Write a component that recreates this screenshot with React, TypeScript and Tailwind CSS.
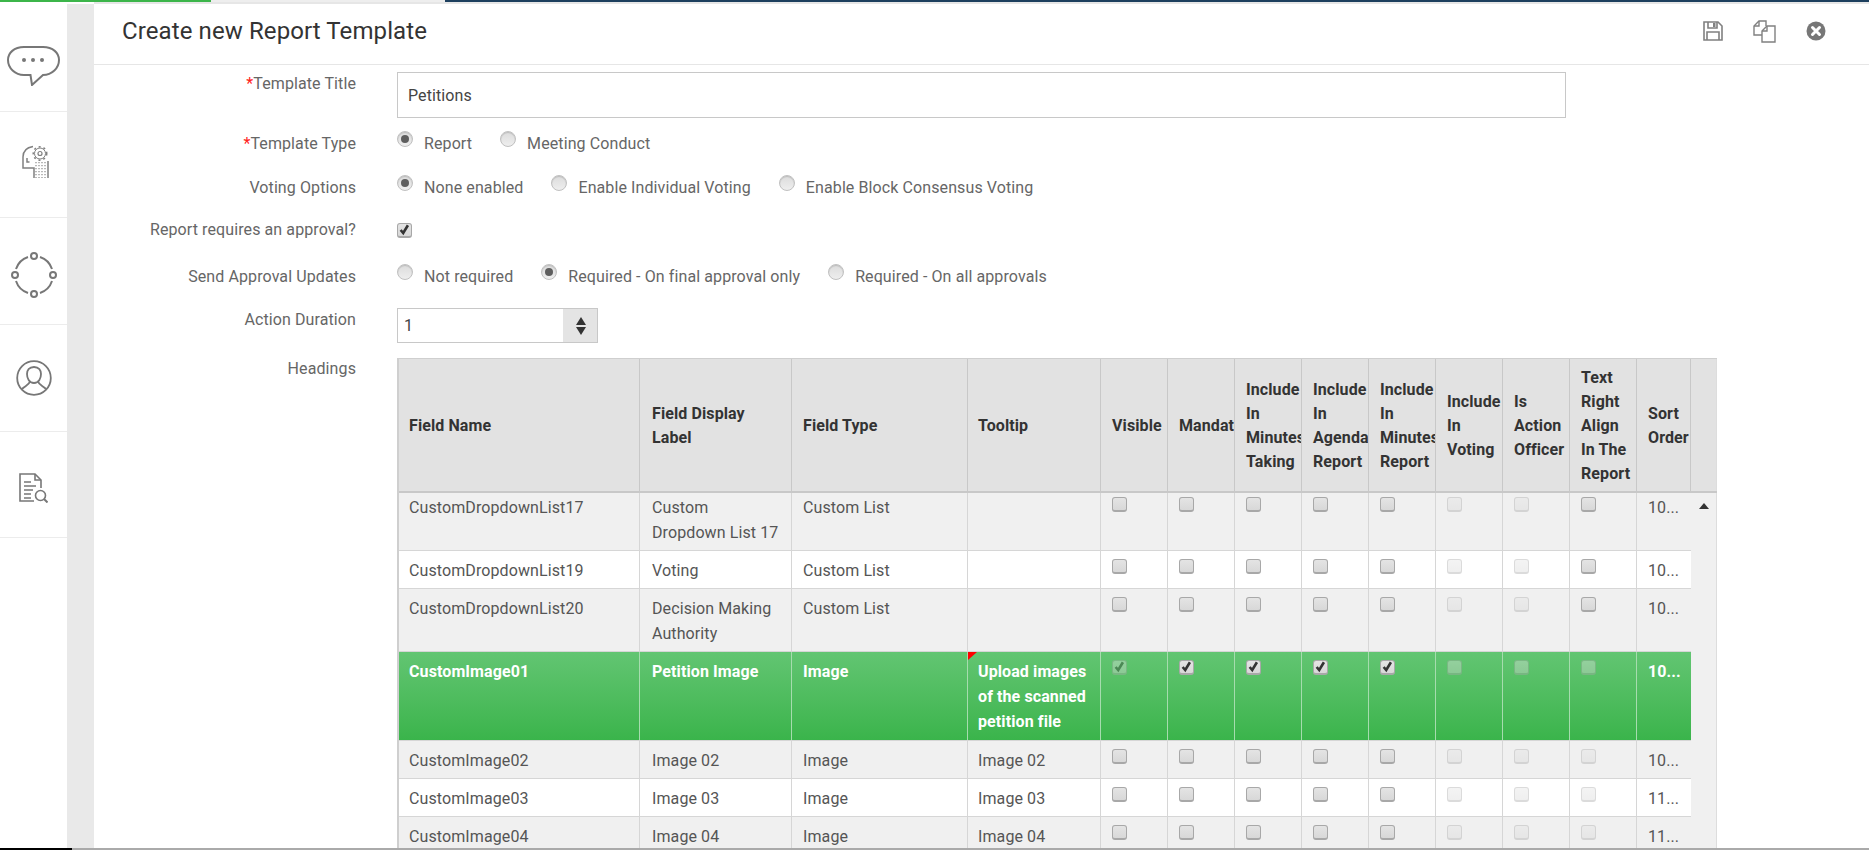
const COLS = "grid grid-cols-[241px_152px_176px_133px_67px_67px_67px_67px_67px_67px_67px_67px_54px]";

type Box = "on" | "off" | "dim" | "dimOn";
type Row = {
  height: string;
  pad: string;
  boxPad: string;
  cells: string[];
  boxes: Box[];
  sort: string;
  striped?: boolean;
  active?: boolean;
};

const HEADERS = [
  "Visible",
  "Mandatory",
  "Include\nIn\nMinutes\nTaking",
  "Include\nIn\nAgenda\nReport",
  "Include\nIn\nMinutes\nReport",
  "Include\nIn\nVoting",
  "Is\nAction\nOfficer",
  "Text\nRight\nAlign\nIn The\nReport",
  "Sort\nOrder",
];

const OPEN: Box[] = ["off", "off", "off", "off", "off", "dim", "dim", "off"];
const LOCKED: Box[] = ["off", "off", "off", "off", "off", "dim", "dim", "dim"];

const ROWS: Row[] = [
  { height: "h-[58px]", pad: "pt-[2px]", boxPad: "pt-[4px]", cells: ["CustomDropdownList17", "Custom\nDropdown List 17", "Custom List", ""], boxes: OPEN, sort: "10...", striped: true },
  { height: "h-[38px]", pad: "pt-[7px]", boxPad: "pt-[8px]", cells: ["CustomDropdownList19", "Voting", "Custom List", ""], boxes: OPEN, sort: "10..." },
  { height: "h-[63px]", pad: "pt-[7px]", boxPad: "pt-[8px]", cells: ["CustomDropdownList20", "Decision Making\nAuthority", "Custom List", ""], boxes: OPEN, sort: "10...", striped: true },
  { height: "h-[89px]", pad: "pt-[7px]", boxPad: "pt-[8px]", cells: ["CustomImage01", "Petition Image", "Image", "Upload images\nof the scanned\npetition file"], boxes: ["dimOn", "on", "on", "on", "on", "dim", "dim", "dim"], sort: "10...", active: true },
  { height: "h-[38px]", pad: "pt-[7px]", boxPad: "pt-[8px]", cells: ["CustomImage02", "Image 02", "Image", "Image 02"], boxes: LOCKED, sort: "10...", striped: true },
  { height: "h-[38px]", pad: "pt-[7px]", boxPad: "pt-[8px]", cells: ["CustomImage03", "Image 03", "Image", "Image 03"], boxes: LOCKED, sort: "11..." },
  { height: "h-[38px]", pad: "pt-[7px]", boxPad: "pt-[8px]", cells: ["CustomImage04", "Image 04", "Image", "Image 04"], boxes: LOCKED, sort: "11...", striped: true },
];

function Tick() {
  return (
    <svg viewBox="0 0 14 14" className="h-full w-full">
      <path d="M2.5 7 L5.5 10.5 L11 1.5" fill="none" stroke="#333" strokeWidth="3" />
    </svg>
  );
}

function Checkbox({ state }: { state: Box }) {
  const faded = state === "dim" || state === "dimOn";
  const checked = state === "on" || state === "dimOn";
  return (
    <span
      className={`block h-[15px] w-[15px] rounded-[3px] border border-b-2 border-[#a8a8a8] bg-gradient-to-b from-[#e4e4e4] to-[#d8d8d8] ${faded ? "opacity-40" : ""}`}
    >
      {checked && <Tick />}
    </span>
  );
}

function Radio({ on }: { on?: boolean }) {
  return (
    <span className="mb-2 flex h-4 w-4 shrink-0 items-center justify-center rounded-full border border-[#c0c0c0] bg-gradient-to-b from-[#dcdcdc] to-[#eeeeee] shadow-[inset_0_1px_1px_rgba(0,0,0,0.15)]">
      {on && <span className="h-2 w-2 rounded-full bg-[#5e5e5e]" />}
    </span>
  );
}

function Option({ label, on }: { label: string; on?: boolean }) {
  return (
    <div className="flex items-center gap-[11px]">
      <Radio on={on} />
      <span className="translate-y-px">{label}</span>
    </div>
  );
}

function FormRow({ label, required, drop, className, children }: { label: string; required?: boolean; drop?: boolean; className: string; children: React.ReactNode }) {
  return (
    <div className={`flex ${className}`}>
      <div className={`w-[262px] shrink-0 text-right leading-6 text-[#666] ${drop ? "translate-y-px" : ""}`}>
        {required && <span className="text-[#ff2020]">*</span>}
        {label}
      </div>
      <div className="ml-[41px] flex min-h-6 items-center gap-7 leading-6 text-[#666]">{children}</div>
    </div>
  );
}

function SideItem({ pad, children }: { pad: string; children: React.ReactNode }) {
  return <div className={`flex justify-center border-b border-[#ececec] ${pad}`}>{children}</div>;
}

function ChatIcon() {
  return (
    <svg width="53" height="40" viewBox="0 0 53 40" fill="none" stroke="#777" strokeWidth="2">
      <path d="M17 1 H36 C46 1 52 7 52 14 C52 22 45 29 36 29 H36 L25 39 L23.5 29 H17 C8 29 1 22 1 14 C1 7 7 1 17 1 Z" />
      <circle cx="17" cy="14" r="2" fill="#777" stroke="none" />
      <circle cx="26" cy="14" r="2" fill="#777" stroke="none" />
      <circle cx="35" cy="14" r="2" fill="#777" stroke="none" />
    </svg>
  );
}

function HeadIcon() {
  return (
    <svg width="28" height="33" viewBox="0 0 28 33" fill="none" stroke="#808080" strokeWidth="1.5">
      <path d="M11 1.5 C4.5 2.5 1 6.5 1 12 V23 H12 V33" />
      <circle cx="18" cy="8.5" r="2" strokeWidth="1.2" />
      <circle cx="18" cy="8.5" r="5.5" strokeWidth="1" />
      <circle cx="18" cy="8.5" r="6.7" strokeDasharray="2 3" strokeWidth="1.6" />
      <path d="M5 13 V17 H7.5" />
      <path d="M26 16 V33" />
      <path d="M14 17 V33 M17 17 V33 M20 17 V33 M23 17 V33" strokeDasharray="1.2 1.8" strokeWidth="1.1" />
    </svg>
  );
}

function RingIcon() {
  return (
    <svg width="46" height="46" viewBox="0 0 46 46" fill="none" stroke="#777" strokeWidth="2">
      <circle cx="23" cy="4" r="3" />
      <circle cx="42" cy="23" r="3" />
      <circle cx="23" cy="42" r="3" />
      <circle cx="4" cy="23" r="3" />
      <path d="M29 5 A19 19 0 0 1 41 17" />
      <path d="M41 29 A19 19 0 0 1 29 41" />
      <path d="M17 41 A19 19 0 0 1 5 29" />
      <path d="M5 17 A19 19 0 0 1 17 5" />
    </svg>
  );
}

function UserIcon() {
  return (
    <svg width="36" height="36" viewBox="0 0 36 36" fill="none" stroke="#777" strokeWidth="1.8">
      <circle cx="18" cy="18" r="16.8" />
      <path d="M18 7 C13 7 11 10.5 11 14 C11 18 13 23 18 23 C23 23 25 18 25 14 C25 10.5 23 7 18 7 Z" />
      <path d="M14 21.5 C13 25 9 26 6 29" />
      <path d="M22 21.5 C23 25 27 26 30 29" />
    </svg>
  );
}

function DocSearchIcon() {
  return (
    <svg width="29" height="30" viewBox="0 0 29 30" fill="none" stroke="#777" strokeWidth="1.6">
      <path d="M22 15 V7 L16 1 H1 V28 H15" />
      <path d="M16 1 V7 H22" />
      <path d="M5 9 H12 M5 13 H17 M5 17 H14 M5 21 H12 M5 25 H12" />
      <circle cx="21.5" cy="22.5" r="5" />
      <path d="M25 26 L28.5 29.5" strokeWidth="2" />
    </svg>
  );
}

function SaveIcon() {
  return (
    <svg width="20" height="20" viewBox="0 0 20 20" fill="none" stroke="#808080" strokeWidth="1.6">
      <path d="M1 1 H15 L19 5 V19 H1 Z" />
      <path d="M5 1 V7 H14 V1" />
      <rect x="10" y="2" width="2.5" height="4" fill="#808080" stroke="none" />
      <path d="M4 19 V11 H16 V19" />
    </svg>
  );
}

function CopyIcon() {
  return (
    <svg width="23" height="23" viewBox="0 0 23 23" fill="none" stroke="#808080" strokeWidth="1.4">
      <path d="M9 15 H1 V6 L6 1 H13 V6" />
      <path d="M6 1 V6 H1" />
      <path d="M9 11 L14 6 H22 V22 H9 Z" fill="#fff" />
      <path d="M14 6 V11 H9" />
    </svg>
  );
}

function CloseIcon() {
  return (
    <svg width="20" height="20" viewBox="0 0 20 20">
      <circle cx="10" cy="10" r="9.5" fill="#777" />
      <path d="M6.5 6.5 L13.5 13.5 M13.5 6.5 L6.5 13.5" stroke="#fff" strokeWidth="3" strokeLinecap="round" />
    </svg>
  );
}

function HeadCell({ text, className = "pl-[11px]" }: { text: string; className?: string }) {
  return (
    <div className={`flex items-center overflow-hidden border-r border-[#c8c8c8] pt-[2px] leading-6 font-bold whitespace-pre text-[#333] ${className}`}>
      {text}
    </div>
  );
}

function BodyRow({ row }: { row: Row }) {
  const bg = row.active
    ? "bg-gradient-to-b from-[#62c572] to-[#3ab44b] font-bold text-white"
    : row.striped
      ? "bg-[#f0f0f0] text-[#555]"
      : "bg-white text-[#555]";
  const line = row.active ? "border-[#a6dcae]" : "border-[#d6d6d6]";
  return (
    <div className={`${COLS} ${row.height} ${bg} border-b border-[#d6d6d6] leading-[25px]`}>
      {row.cells.map((cell, i) => (
        <div key={i} className={`relative overflow-hidden border-r whitespace-pre-line ${line} ${row.pad} ${i === 0 ? "pl-[10px]" : i === 1 ? "pl-3" : i === 3 ? "pl-[10px]" : "pl-[11px]"}`}>
          {row.active && i === 3 && (
            <span className="absolute top-0 left-0 h-0 w-0 border-t-[8px] border-r-[9px] border-t-[#ff0000] border-r-transparent" />
          )}
          {cell}
        </div>
      ))}
      {row.boxes.map((box, i) => (
        <div key={i} className={`border-r pl-[11px] ${line} ${row.boxPad}`}>
          <Checkbox state={box} />
        </div>
      ))}
      <div className={`overflow-hidden pl-[11px] whitespace-nowrap ${row.pad}`}>{row.sort}</div>
    </div>
  );
}

export default function App() {
  return (
    <div className="flex h-screen flex-col overflow-hidden bg-white font-['Roboto',sans-serif] text-base tracking-[0.1px]">
      <div className="flex h-[2px] shrink-0">
        <div className="w-[211px] bg-[#3cb54a]" />
        <div className="w-[234px] bg-[#eeeeee]" />
        <div className="flex-1 bg-[#1d3f5e]" />
      </div>

      <div className="flex min-h-0 flex-1">
        <aside className="w-[67px] shrink-0">
          <SideItem pad="h-[110px] pt-[44px]">
            <ChatIcon />
          </SideItem>
          <SideItem pad="h-[106px] pt-[33px] pl-1">
            <HeadIcon />
          </SideItem>
          <SideItem pad="h-[107px] pt-[34px]">
            <RingIcon />
          </SideItem>
          <SideItem pad="h-[107px] pt-[35px]">
            <UserIcon />
          </SideItem>
          <SideItem pad="h-[106px] pt-[41px]">
            <DocSearchIcon />
          </SideItem>
        </aside>
        <div className="mt-[2px] w-[27px] shrink-0 bg-[#e9e9e9]" />

        <main className="min-w-0 flex-1 overflow-hidden border-t-2 border-[#e6e6e6]">
          <header className="flex h-[61px] items-center justify-between border-b border-[#e6e6e6] pr-[43px] pl-7">
            <h1 className="mb-[6px] text-2xl font-normal text-[#333]">Create new Report Template</h1>
            <div className="mb-[6px] flex items-center gap-[30px]">
              <SaveIcon />
              <CopyIcon />
              <CloseIcon />
            </div>
          </header>

          <FormRow label="Template Title" required className="mt-[7px]">
            <input
              readOnly
              value="Petitions"
              className="h-[46px] w-[1169px] border border-[#c8c8c8] px-[10px] pt-px text-base text-[#444] outline-none"
            />
          </FormRow>
          <FormRow label="Template Type" required drop className="mt-[13px]">
            <Option label="Report" on />
            <Option label="Meeting Conduct" />
          </FormRow>
          <FormRow label="Voting Options" drop className="mt-5">
            <Option label="None enabled" on />
            <Option label="Enable Individual Voting" />
            <Option label="Enable Block Consensus Voting" />
          </FormRow>
          <FormRow label="Report requires an approval?" className="mt-[19px]">
            <Checkbox state="on" />
          </FormRow>
          <FormRow label="Send Approval Updates" drop className="mt-[22px]">
            <Option label="Not required" />
            <Option label="Required - On final approval only" on />
            <Option label="Required - On all approvals" />
          </FormRow>
          <FormRow label="Action Duration" className="mt-5">
            <div className="flex h-[35px] w-[201px] border border-[#c8c8c8]">
              <input readOnly value="1" className="w-[167px] border-r-2 border-[#e4e4e4] px-[6px] text-base text-[#444] outline-none" />
              <div className="flex flex-1 flex-col items-center justify-center gap-[2px] bg-[#e4e4e4]">
                <span className="h-0 w-0 border-x-[5px] border-b-[8px] border-x-transparent border-b-[#333]" />
                <span className="h-0 w-0 border-x-[5px] border-t-[8px] border-x-transparent border-t-[#333]" />
              </div>
            </div>
          </FormRow>

          <div className="mt-[15px] flex">
            <div className="-mt-px w-[262px] shrink-0 text-right leading-6 text-[#666]">Headings</div>
            <div className="ml-[41px] w-[1320px] border-t border-l-2 border-[#cfcfcf]">
              <div className="flex h-[134px] border-b-2 border-[#c8c8c8] bg-[#e2e2e2]">
                <div className={`${COLS} w-[1292px]`}>
                  <HeadCell text="Field Name" className="pl-[10px]" />
                  <HeadCell text={"Field Display\nLabel"} className="pl-3" />
                  <HeadCell text="Field Type" />
                  <HeadCell text="Tooltip" className="pl-[10px]" />
                  {HEADERS.map((h) => (
                    <HeadCell key={h} text={h} />
                  ))}
                </div>
                <div className="flex-1 border-r border-[#dddddd]" />
              </div>
              <div className="flex">
                <div className="w-[1292px]">
                  {ROWS.map((row) => (
                    <BodyRow key={row.cells[0]} row={row} />
                  ))}
                </div>
                <div className="flex flex-1 justify-center border-r border-[#dddddd] bg-[#f0f0f0] pt-[10px]">
                  <span className="h-0 w-0 border-x-[5px] border-b-[6px] border-x-transparent border-b-[#333]" />
                </div>
              </div>
            </div>
          </div>
        </main>
      </div>

      <div className="flex h-[2px] shrink-0">
        <div className="w-[72px] bg-black" />
        <div className="flex-1 bg-[#aaaaaa]" />
      </div>
    </div>
  );
}
